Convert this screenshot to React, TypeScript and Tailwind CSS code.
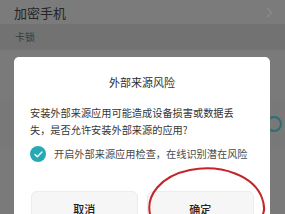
import React from 'react';

const font = { fontFamily: '"Noto Sans CJK SC", "Noto Sans", sans-serif' };

const App: React.FC = () => {
  return (
    <div className="relative w-[285px] h-[214px] overflow-hidden bg-[#7a7a7a]" style={font}>
      {/* Dimmed settings list behind the dialog */}
      <div className="flex h-[24px] items-center justify-between bg-[#7b7b7b] pl-[14px] pr-[12px]">
        <span className="text-[13px] leading-none text-[#252525]">加密手机</span>
        <svg width="7" height="11" viewBox="0 0 7 11" fill="none">
          <path d="M1 1l4.5 4.5L1 10" stroke="#8c8c8c" strokeWidth="1.2" />
        </svg>
      </div>
      <div className="flex h-[26px] items-center bg-[#727272] pl-[15px]">
        <span className="text-[10px] leading-none text-[#3a3a3a]">卡锁</span>
      </div>
      <div className="h-[50px] bg-[#7a7a7a]" />
      <div className="flex h-[48px] items-center justify-end bg-[#787878] pr-[3px]">
        <div className="h-[16px] w-[16px] rounded-full border-2 border-[#2b6f75]" />
      </div>

      {/* Dialog */}
      <div className="absolute left-[14px] top-[57px] w-[256px] rounded-[5px] bg-white px-[16px] pb-[20px]">
        <div className="pt-[17px] text-center text-[11px] leading-[16px] text-[#2e2e2e]">外部来源风险</div>
        <p className="mt-[14px] text-[10.2px] leading-[17px] text-[#363636]">
          安装外部来源应用可能造成设备损害或数据丢
          <br />
          失，是否允许安装外部来源的应用?
        </p>
        <div className="mt-[8px] flex items-center">
          <div className="flex h-[16px] w-[16px] shrink-0 items-center justify-center rounded-full bg-[#27a9b5]">
            <svg width="9" height="7" viewBox="0 0 9 7" fill="none">
              <path d="M1 3.5l2.3 2.2L8 1" stroke="white" strokeWidth="1.4" strokeLinecap="round" strokeLinejoin="round" />
            </svg>
          </div>
          <span className="ml-[8px] text-[10.2px] leading-none text-[#4a4a4a]">开启外部来源应用检查，在线识别潜在风险</span>
        </div>
        <div className="mt-[29px] flex gap-[9px] pl-[1px]">
          <button className="flex h-[36px] w-[107px] items-center justify-center rounded-[6px] border border-[#ececec] bg-[#f6f6f6] text-[11px] font-medium text-[#222222]">
            取消
          </button>
          <button className="flex h-[36px] w-[108px] items-center justify-center rounded-[6px] border border-[#ececec] bg-[#f6f6f6] text-[11px] font-medium text-[#222222]">
            确定
          </button>
        </div>
      </div>

      {/* Red hand-drawn circle annotation */}
      <svg className="absolute left-0 top-0" width="285" height="214" viewBox="0 0 285 214" fill="none">
        <path
          d="M150 214 C146 196 160 176 190 170 C222 164 254 176 262 198 C265 206 264 212 263 214"
          stroke="#c4252b"
          strokeWidth="2"
          strokeLinecap="round"
        />
      </svg>
    </div>
  );
};

export default App;
